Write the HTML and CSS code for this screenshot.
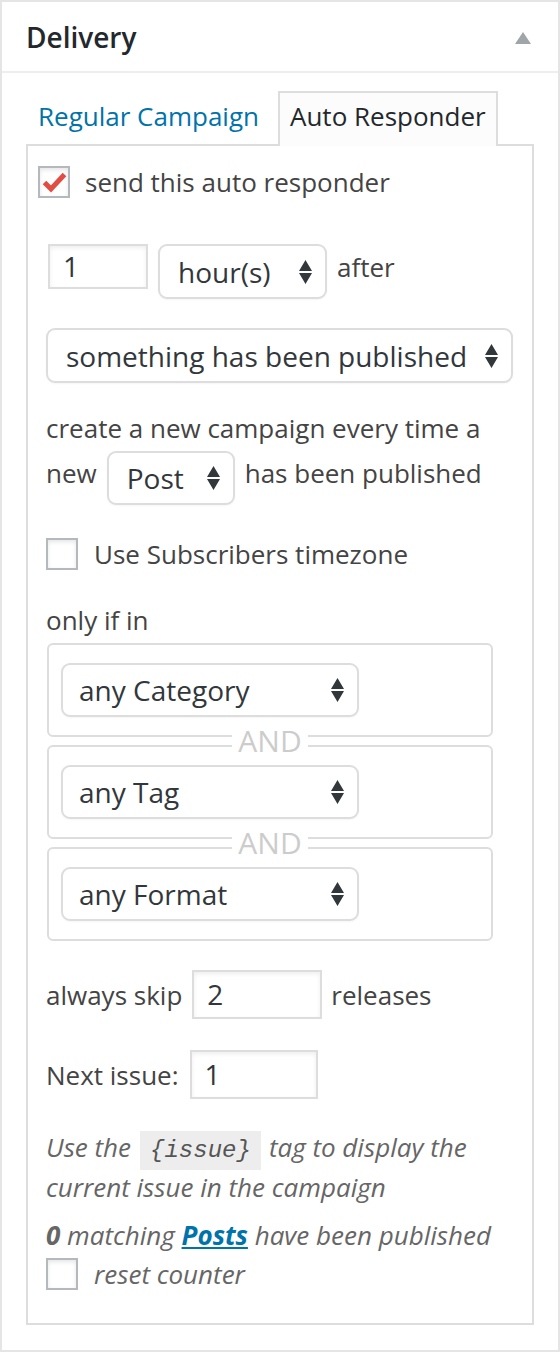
FILE: index.html
```html
<!DOCTYPE html>
<html>
<head>
<meta charset="utf-8">
<title>Delivery</title>
<link rel="stylesheet" href="styles.css">
</head>
<body>
<svg class="defs" width="0" height="0" aria-hidden="true">
  <symbol id="arrows" viewBox="0 0 13 24">
    <path d="M6.5 0 L13 11 L0 11 Z M0 13 L13 13 L6.5 24 Z" fill="#32373c"/>
  </symbol>
</svg>
<div class="postbox">
  <div class="postbox-header">
    <h2 class="hndle">Delivery</h2>
    <svg class="toggle" width="16" height="12" viewBox="0 0 16 12"><path d="M8 0 L16 12 L0 12 Z" fill="#a0a5aa"/></svg>
  </div>
  <div class="inside">
    <div class="tabs">
      <a class="tab tab-link">Regular Campaign</a>
      <span class="tab active">Auto Responder</span>
    </div>
    <div class="panel">
      <div class="check-row first">
        <span class="checkbox"><svg width="28" height="28" viewBox="0 0 28 28"><polyline points="4.5,14.5 11,21 24.5,6.5" fill="none" stroke="#e14d43" stroke-width="5"/></svg></span>
        <span class="label">send this auto responder</span>
      </div>
      <div class="settings">
        <div class="row row-time">
          <span class="input w-amount">1</span>
          <span class="select sel-hours"><span>hour(s)</span><svg class="arr"><use href="#arrows"/></svg></span>
          <span class="txt">after</span>
        </div>
        <div class="select sel-trigger"><span>something has been published</span><svg class="arr"><use href="#arrows"/></svg></div>
        <p class="create">create a new campaign every time a</p>
        <div class="row row-new">
          <span class="txt">new</span>
          <span class="select sel-post"><span>Post</span><svg class="arr"><use href="#arrows"/></svg></span>
          <span class="txt">has been published</span>
        </div>
        <div class="check-row tz">
          <span class="checkbox"></span>
          <span class="label">Use Subscribers timezone</span>
        </div>
        <p class="only">only if in</p>
        <div class="conditions">
          <div class="cond">
            <div class="select sel-cond"><span>any Category</span><svg class="arr"><use href="#arrows"/></svg></div>
          </div>
          <div class="and"><span>AND</span></div>
          <div class="cond">
            <div class="select sel-cond"><span>any Tag</span><svg class="arr"><use href="#arrows"/></svg></div>
          </div>
          <div class="and"><span>AND</span></div>
          <div class="cond">
            <div class="select sel-cond"><span>any Format</span><svg class="arr"><use href="#arrows"/></svg></div>
          </div>
        </div>
        <div class="row row-skip">
          <span>always skip</span>
          <span class="input w-skip">2</span>
          <span>releases</span>
        </div>
        <div class="row row-issue">
          <span>Next issue:</span>
          <span class="input w-issue">1</span>
        </div>
        <p class="description desc-issue">Use the<code>{issue}</code>tag to display the current issue in the campaign</p>
        <p class="description matching"><strong>0</strong> matching <a class="posts-link">Posts</a> have been published</p>
        <div class="check-row reset">
          <span class="checkbox"></span>
          <span class="label description">reset counter</span>
        </div>
      </div>
    </div>
  </div>
</div>
</body>
</html>
```
FILE: styles.css
```css
* { box-sizing: border-box; }
html, body { margin: 0; padding: 0; background: #fff; }
body {
  font-family: "Open Sans", "Noto Sans", sans-serif;
  font-size: 26px;
  color: #444;
  width: 560px;
}
.defs { position: absolute; width: 0; height: 0; overflow: hidden; }

.postbox {
  border: 2px solid #e5e5e5;
  background: #fff;
}
.postbox-header {
  height: 71px;
  border-bottom: 2px solid #eee;
  display: flex;
  align-items: center;
  justify-content: space-between;
  padding: 0 27px 0 24px;
}
.hndle {
  margin: 0;
  font-size: 28px;
  font-weight: 600;
  color: #23282d;
  line-height: 28px;
}
.toggle { display: block; margin-top: 3px; }

.inside { padding: 18px 24px 25px; }

.tabs {
  display: flex;
  gap: 7px;
  margin-bottom: -2px;
  position: relative;
  z-index: 1;
}
.tab {
  display: block;
  border: 2px solid transparent;
  border-bottom: none;
  padding: 4px 10px 11px;
  line-height: 38px;
  font-size: 26px;
}
.tab-link { color: #0073aa; text-decoration: none; }
.tab.active { border-color: #ddd; background: #fcfcfc; color: #23282d; }

.panel {
  border: 2px solid #ddd;
  background: #fff;
  padding: 20px 10px 33px;
}

.check-row { display: flex; align-items: center; }
.checkbox {
  display: block;
  flex: none;
  width: 32px;
  height: 32px;
  border: 2px solid #b4b9be;
  background: #fff;
  box-shadow: inset 0 2px 4px rgba(0, 0, 0, 0.1);
}
.checkbox svg { display: block; }
.check-row .label { margin-left: 15px; line-height: 32px; }

.settings { padding-left: 8px; }
.row { display: flex; }

.input {
  display: block;
  flex: none;
  border: 2px solid #ddd;
  background: #fff;
  box-shadow: inset 0 2px 4px rgba(0, 0, 0, 0.07);
  font-size: 28px;
  color: #32373c;
  padding: 0 13px;
}
.select {
  display: flex;
  flex: none;
  align-items: center;
  justify-content: space-between;
  border: 2px solid #ddd;
  border-radius: 9px;
  background: #fff;
  box-shadow: 0 1px 2px rgba(0, 0, 0, 0.04);
  font-size: 28px;
  color: #32373c;
  padding: 0 13px 0 18px;
  height: 55px;
}
.arr { display: block; width: 13px; height: 24px; flex: none; }

.row-time { margin-top: 46px; align-items: flex-start; }
.w-amount { width: 100px; height: 45px; line-height: 41px; margin-left: 2px; }
.sel-hours { width: 169px; margin-left: 10px; }
.row-time .txt { margin-left: 10px; line-height: 46px; }

.sel-trigger { width: 467px; margin-top: 29px; }

.create { margin: 27px 0 0; line-height: 36px; }
.row-new { margin-top: 5px; align-items: flex-start; }
.row-new .txt { line-height: 44px; }
.sel-post { width: 128px; height: 54px; margin: 0 10px; }

.tz { margin-top: 33px; }
.tz .label { margin-left: 16px; }

.only { margin: 32px 0 0; line-height: 36px; }

.conditions { margin-top: 5px; margin-left: 1px; width: 446px; }
.cond {
  border: 2px solid #ddd;
  border-radius: 6px;
  padding: 18px 12px;
}
.sel-cond { width: 298px; height: 54px; padding-left: 16px; }
.and {
  height: 8px;
  line-height: 8px;
  text-align: center;
  font-size: 30px;
  color: #ccc;
}
.and span { background: #fff; padding: 0 6px; }

.row-skip { margin-top: 29px; align-items: center; }
.w-skip { width: 130px; height: 49px; line-height: 45px; margin: 0 9px 0 10px; }
.row-issue { margin-top: 31px; align-items: center; }
.w-issue { width: 128px; height: 49px; line-height: 45px; margin-left: 11px; }

.description { font-style: italic; color: #666; }
p.description { margin: 0; line-height: 40px; }
.desc-issue { margin-top: 28px !important; }
.matching { margin-top: 8px !important; }
.matching strong { font-weight: 700; }
.posts-link { color: #0073aa; font-weight: 700; text-decoration: underline; }
code {
  font-family: "Liberation Mono", "DejaVu Sans Mono", monospace;
  font-size: 24px;
  line-height: 24px;
  background: #ededed;
  padding: 6px 10px;
  margin: 0 8px 0 9px;
  color: #555;
}
.reset { margin-top: 3px; }
.reset .label { margin-left: 16px; }
```
